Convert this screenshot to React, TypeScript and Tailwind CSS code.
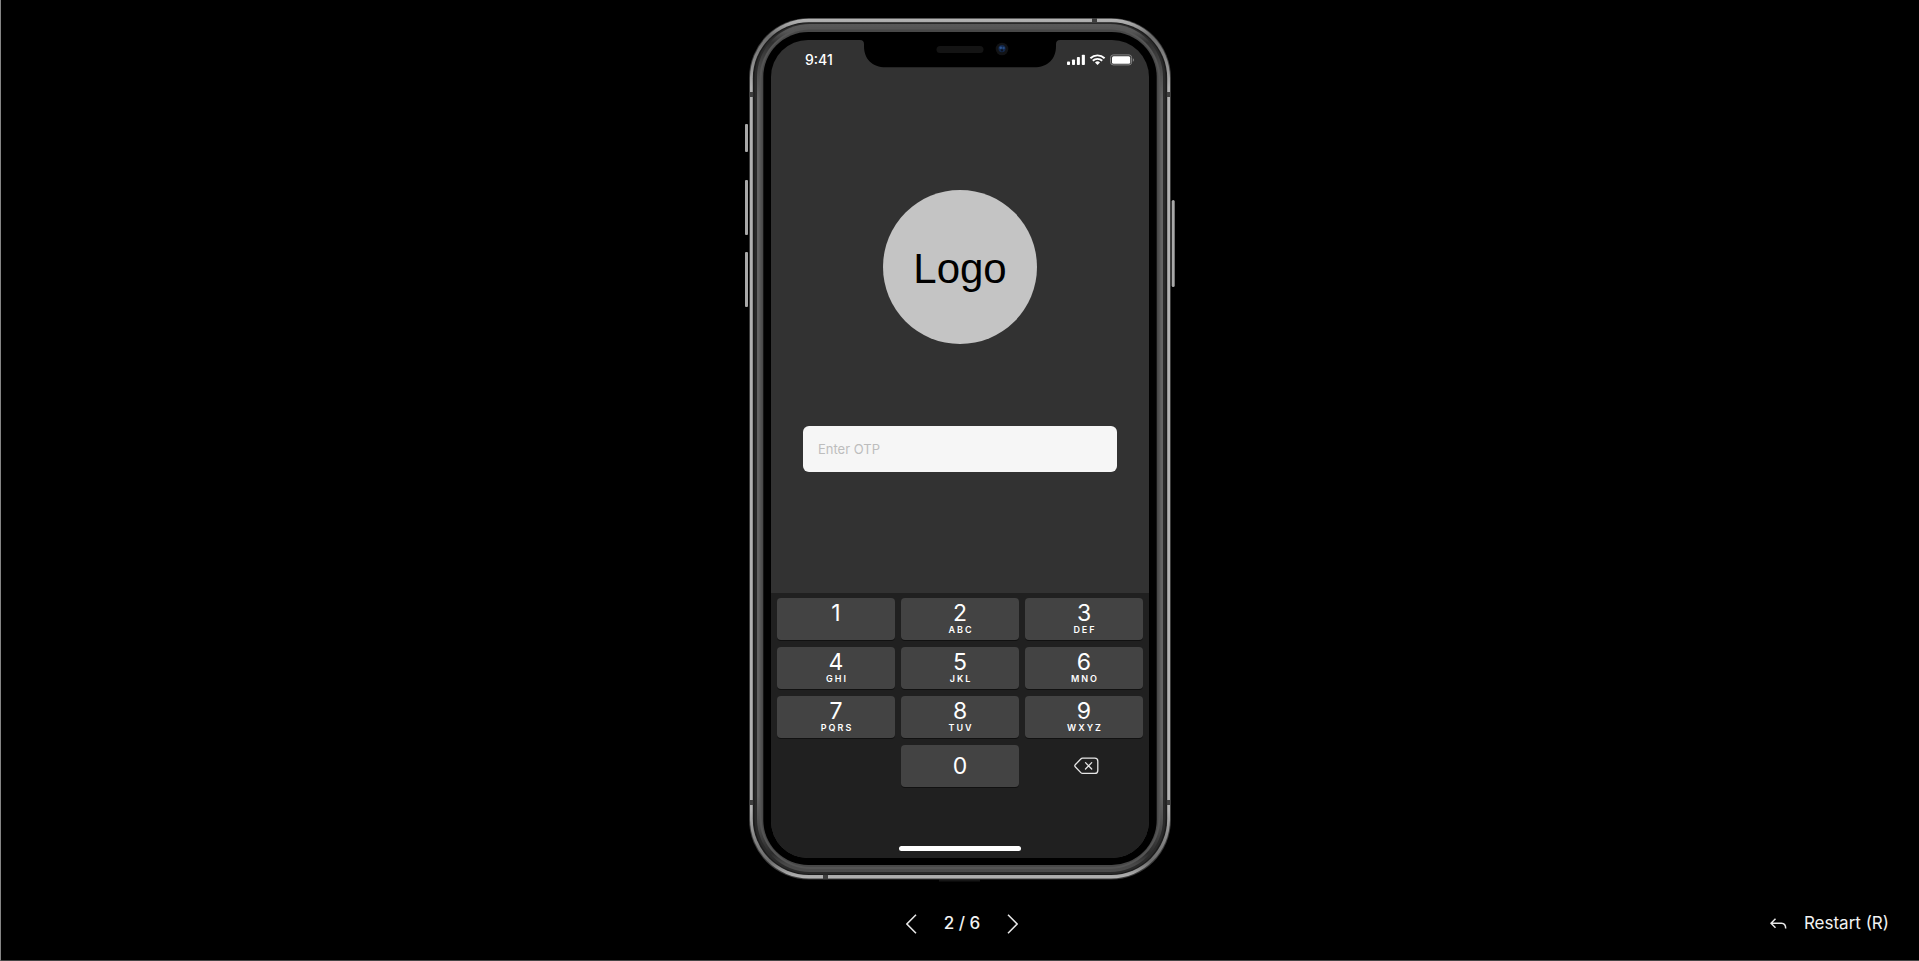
const keys: { digit: string; letters: string }[] = [
  { digit: "1", letters: "" },
  { digit: "2", letters: "ABC" },
  { digit: "3", letters: "DEF" },
  { digit: "4", letters: "GHI" },
  { digit: "5", letters: "JKL" },
  { digit: "6", letters: "MNO" },
  { digit: "7", letters: "PQRS" },
  { digit: "8", letters: "TUV" },
  { digit: "9", letters: "WXYZ" },
];

/* Metal case of the phone: side buttons, rim, bevel and antenna bands. */
function DeviceCase() {
  return (
    <svg
      className="pointer-events-none absolute -left-1 -top-0.5"
      width="430"
      height="867"
      viewBox="745 16 430 867"
      aria-hidden="true"
    >
      <defs>
        <linearGradient id="rim" x1="0" y1="0" x2="0" y2="1">
          <stop offset="0" stopColor="#b4b4b4" />
          <stop offset="0.005" stopColor="#a8a8a8" />
          <stop offset="0.02" stopColor="#6c6c6c" />
          <stop offset="0.045" stopColor="#848484" />
          <stop offset="0.08" stopColor="#b2b2b2" />
          <stop offset="0.92" stopColor="#b2b2b2" />
          <stop offset="0.955" stopColor="#848484" />
          <stop offset="0.98" stopColor="#6c6c6c" />
          <stop offset="0.995" stopColor="#a8a8a8" />
          <stop offset="1" stopColor="#b4b4b4" />
        </linearGradient>
        <linearGradient id="bevel" x1="0" y1="0" x2="0" y2="1">
          <stop offset="0" stopColor="#585858" />
          <stop offset="0.009" stopColor="#565656" />
          <stop offset="0.022" stopColor="#303030" />
          <stop offset="0.05" stopColor="#484848" />
          <stop offset="0.09" stopColor="#646464" />
          <stop offset="0.91" stopColor="#646464" />
          <stop offset="0.95" stopColor="#484848" />
          <stop offset="0.978" stopColor="#2c2c2c" />
          <stop offset="0.991" stopColor="#484848" />
          <stop offset="1" stopColor="#4c4c4c" />
        </linearGradient>
      </defs>
      <g fill="#a8a8a8">
        <rect x="745" y="124" width="3" height="28" rx="1" />
        <rect x="745" y="180" width="3" height="55" rx="1" />
        <rect x="745" y="252" width="3" height="55" rx="1" />
        <rect x="1171.7" y="200" width="3" height="87" rx="1.5" />
      </g>
      <rect x="939" y="879.5" width="41" height="2" fill="#161616" />
      <rect x="749" y="18" width="422" height="861.5" rx="60" fill="#3c3c3c" />
      <rect x="750" y="18.8" width="420" height="859.6" rx="59" fill="url(#rim)" />
      <rect x="752.8" y="22.3" width="414.4" height="852.6" rx="56" fill="#1c1c1c" />
      <rect x="754.5" y="23" width="411" height="851" rx="55" fill="#2a2a2a" />
      <rect x="757" y="24" width="406" height="848" rx="53" fill="url(#bevel)" />
      <rect x="759.6" y="27.5" width="400.8" height="841.5" rx="51" fill="#555555" />
      <rect x="761.6" y="29.5" width="396.8" height="837.5" rx="49" fill="#484848" />
      <rect x="763.3" y="32" width="393.4" height="833" rx="45" fill="#000000" />
      <g fill="#3e3e3e">
        <rect x="1092" y="18" width="5" height="4.6" />
        <rect x="823" y="874.7" width="5" height="4.6" />
        <rect x="749.3" y="92" width="4" height="5" />
        <rect x="1166.7" y="92" width="4" height="5" />
        <rect x="749.3" y="800" width="4" height="5" />
        <rect x="1166.7" y="800" width="4" height="5" />
      </g>
    </svg>
  );
}

function Notch() {
  return (
    <svg
      className="pointer-events-none absolute left-1/2 top-0 -translate-x-1/2"
      width="200"
      height="28"
      viewBox="0 0 200 28"
      aria-hidden="true"
    >
      <path
        d="M0 0C3 0 4 1.5 4 4.5V6C4 19 12 27.3 26 27.3H174C188 27.3 196 19 196 6V4.5C196 1.5 197 0 200 0Z"
        fill="#000"
      />
      <rect x="76.5" y="6" width="47" height="7" rx="3.5" fill="#141414" />
      <circle cx="142" cy="9" r="6.3" fill="#121315" />
      <circle cx="142" cy="8.6" r="3.6" fill="#14284a" />
      <circle cx="140.7" cy="7.8" r="1.3" fill="#2d5590" />
      <circle cx="143.6" cy="8" r="1.2" fill="#264a80" />
      <circle cx="142" cy="10.4" r="1.1" fill="#0b1220" />
    </svg>
  );
}

function StatusIcons() {
  return (
    <svg width="68" height="12" viewBox="0 0 68 12" aria-hidden="true">
      <g fill="#fff">
        <rect x="0" y="7.5" width="3" height="3.5" rx="0.8" />
        <rect x="5" y="5.5" width="3" height="5.5" rx="0.8" />
        <rect x="9.9" y="3" width="3" height="8" rx="0.8" />
        <rect x="14.8" y="0.8" width="3.1" height="10.2" rx="0.8" />
        <path d="M30.5 11L28 8.5a3.7 3.7 0 0 1 5 0z" />
      </g>
      <g fill="none" stroke="#fff" strokeWidth="1.9">
        <path d="M23.4 4.2a10.3 10.3 0 0 1 14.2 0" />
        <path d="M25.8 6.8a6.8 6.8 0 0 1 9.4 0" />
      </g>
      <rect x="43.6" y="0.9" width="21" height="10" rx="2.6" fill="none" stroke="#858585" />
      <rect x="45" y="2.2" width="18.2" height="7.5" rx="1.5" fill="#fff" />
      <path d="M65.9 4.3v3.4c1.5-.6 1.5-2.8 0-3.4z" fill="#858585" />
    </svg>
  );
}

function Keypad() {
  return (
    <div className="grid grid-cols-3 gap-x-1.5 gap-y-[7px]">
      {keys.map(({ digit, letters }) => (
        <button
          key={digit}
          type="button"
          className="flex h-[42px] flex-col items-center rounded bg-[#434343] pt-[3px] text-white shadow-[0_1px_0_#111111]"
        >
          <span className="text-[23px] leading-6">{digit}</span>
          <span className="pl-0.5 text-[9px] font-semibold leading-[10px] tracking-[2px]">{letters}</span>
        </button>
      ))}
      <button
        type="button"
        className="col-start-2 flex h-[42px] items-center justify-center rounded bg-[#434343] text-[23px] leading-6 text-white shadow-[0_1px_0_#111111]"
      >
        0
      </button>
      <button type="button" aria-label="Delete" className="flex h-[42px] items-center justify-center pl-1">
        <svg width="25" height="18" viewBox="0 0 25 18" fill="none" stroke="#e6e6e6" strokeWidth="1.3" aria-hidden="true">
          <path d="M8.6 1.2H20.8a3 3 0 0 1 3 3v9.2a3 3 0 0 1-3 3H8.6a2.5 2.5 0 0 1-1.8-.8L1.2 9.8a1.4 1.4 0 0 1 0-2L6.8 2a2.5 2.5 0 0 1 1.8-.8z" strokeLinejoin="round" />
          <path d="M11.5 5.6l6.2 6.4M17.7 5.6l-6.2 6.4" strokeLinecap="round" />
        </svg>
      </button>
    </div>
  );
}

function Phone() {
  return (
    <div className="relative px-[22px] pb-[21px] pt-[22px]">
      <DeviceCase />
      <main className="relative flex w-[378px] flex-col overflow-hidden rounded-[37px] bg-[#323232]">
        <Notch />
        <div className="flex h-10 items-center justify-between pl-[34px] pr-[14px]">
          <span className="text-sm font-medium text-white">9:41</span>
          <StatusIcons />
        </div>
        <div className="flex flex-col items-center gap-[82px] px-[31px] pb-[121px] pt-[110px]">
          <div className="flex size-[154px] items-center justify-center rounded-full bg-[#c4c4c4] pt-0.5 font-['Liberation_Sans',sans-serif] text-[42px] text-black">
            Logo
          </div>
          <input
            type="text"
            inputMode="numeric"
            aria-label="Enter OTP"
            placeholder="Enter OTP"
            className="h-[46px] w-[314px] rounded-md bg-[#f6f6f6] px-[15px] text-[13px] text-black outline-none placeholder:text-[#bdbdbd]"
          />
        </div>
        <div className="bg-[#202020] px-1.5 pb-[7px] pt-[5px]">
          <Keypad />
          <div className="mx-auto mt-[59px] h-[5px] w-[122px] rounded-full bg-white" />
        </div>
      </main>
    </div>
  );
}

export default function App() {
  return (
    <div className="flex min-h-screen flex-col items-center border-b border-l border-b-[#454545] border-l-[#858585] bg-black pt-[18px] font-['Inter','Liberation_Sans',sans-serif]">
      <Phone />
      <footer className="grid w-full flex-1 grid-cols-[1fr_auto_1fr] items-center px-[30px] pt-2 text-[17px] text-[#f2f2f2]">
        <nav aria-label="Frames" className="col-start-2 flex items-center gap-[27px] pl-1 font-medium">
          <button type="button" aria-label="Previous frame">
            <svg width="11" height="20" viewBox="0 0 11 20" fill="none" stroke="#e8e8e8" strokeWidth="1.5" aria-hidden="true">
              <path d="M10 0.8L0.9 10L10 19.2" />
            </svg>
          </button>
          <span>2 / 6</span>
          <button type="button" aria-label="Next frame">
            <svg width="11" height="20" viewBox="0 0 11 20" fill="none" stroke="#e8e8e8" strokeWidth="1.5" aria-hidden="true">
              <path d="M1 0.8L10.1 10L1 19.2" />
            </svg>
          </button>
        </nav>
        <button type="button" className="flex items-center gap-[17px] justify-self-end">
          <svg width="17" height="12" viewBox="0 0 17 12" fill="none" stroke="#e8e8e8" strokeWidth="1.5" aria-hidden="true">
            <path d="M5.5 0.8L1 5.3L5.5 9.8M1 5.3H11.5C14.5 5.3 15.7 7 15.7 10.6" />
          </svg>
          Restart (R)
        </button>
      </footer>
    </div>
  );
}
